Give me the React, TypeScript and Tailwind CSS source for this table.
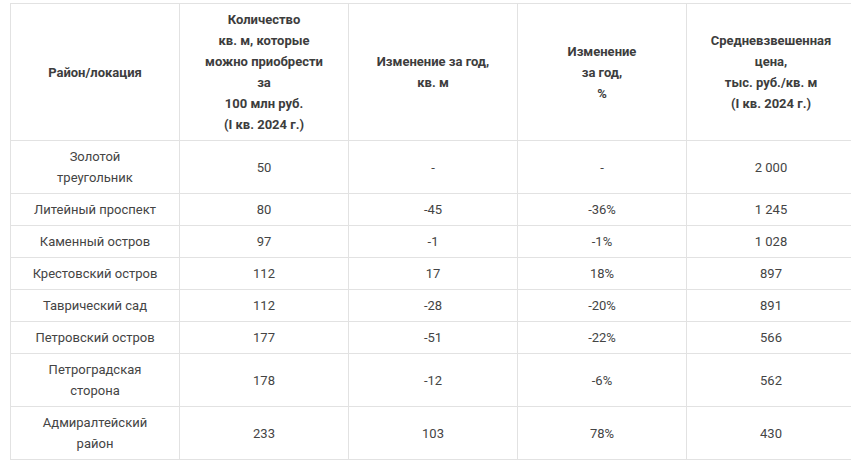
const header = [
  ["Район/локация"],
  ["Количество", "кв. м, которые", "можно приобрести", "за", "100 млн руб.", "(I кв. 2024 г.)"],
  ["Изменение за год,", "кв. м"],
  ["Изменение", "за год,", "%"],
  ["Средневзвешенная", "цена,", "тыс. руб./кв. м", "(I кв. 2024 г.)"],
];

const rows: string[][][] = [
  [["Золотой", "треугольник"], ["50"], ["-"], ["-"], ["2 000"]],
  [["Литейный проспект"], ["80"], ["-45"], ["-36%"], ["1 245"]],
  [["Каменный остров"], ["97"], ["-1"], ["-1%"], ["1 028"]],
  [["Крестовский остров"], ["112"], ["17"], ["18%"], ["897"]],
  [["Таврический сад"], ["112"], ["-28"], ["-20%"], ["891"]],
  [["Петровский остров"], ["177"], ["-51"], ["-22%"], ["566"]],
  [["Петроградская", "сторона"], ["178"], ["-12"], ["-6%"], ["562"]],
  [["Адмиралтейский", "район"], ["233"], ["103"], ["78%"], ["430"]],
];

function Lines({ lines }: { lines: string[] }) {
  return (
    <>
      {lines.map((l, i) => (
        <span key={i} className="block">
          {l}
        </span>
      ))}
    </>
  );
}

export default function App() {
  return (
    <div className="w-[851px] h-[463px] overflow-hidden bg-white">
      <div className="pl-[10px] pt-[3px] w-[900px]">
        <table
          className="border-collapse table-fixed w-[846px] text-[13px] leading-[21px] text-[#444]"
          style={{ fontFamily: "Roboto, 'Liberation Sans', sans-serif" }}
        >
          <thead>
            <tr>
              {header.map((h, i) => (
                <th
                  key={i}
                  className="w-[169px] border border-[#e2e2e2] px-2 py-[5px] text-center align-middle font-bold text-[#3d3d3d]"
                >
                  <Lines lines={h} />
                </th>
              ))}
            </tr>
          </thead>
          <tbody>
            {rows.map((r, ri) => (
              <tr key={ri}>
                {r.map((c, ci) => (
                  <td
                    key={ci}
                    className="border border-[#e2e2e2] px-2 py-[5px] text-center align-middle"
                  >
                    <Lines lines={c} />
                  </td>
                ))}
              </tr>
            ))}
          </tbody>
        </table>
      </div>
    </div>
  );
}
